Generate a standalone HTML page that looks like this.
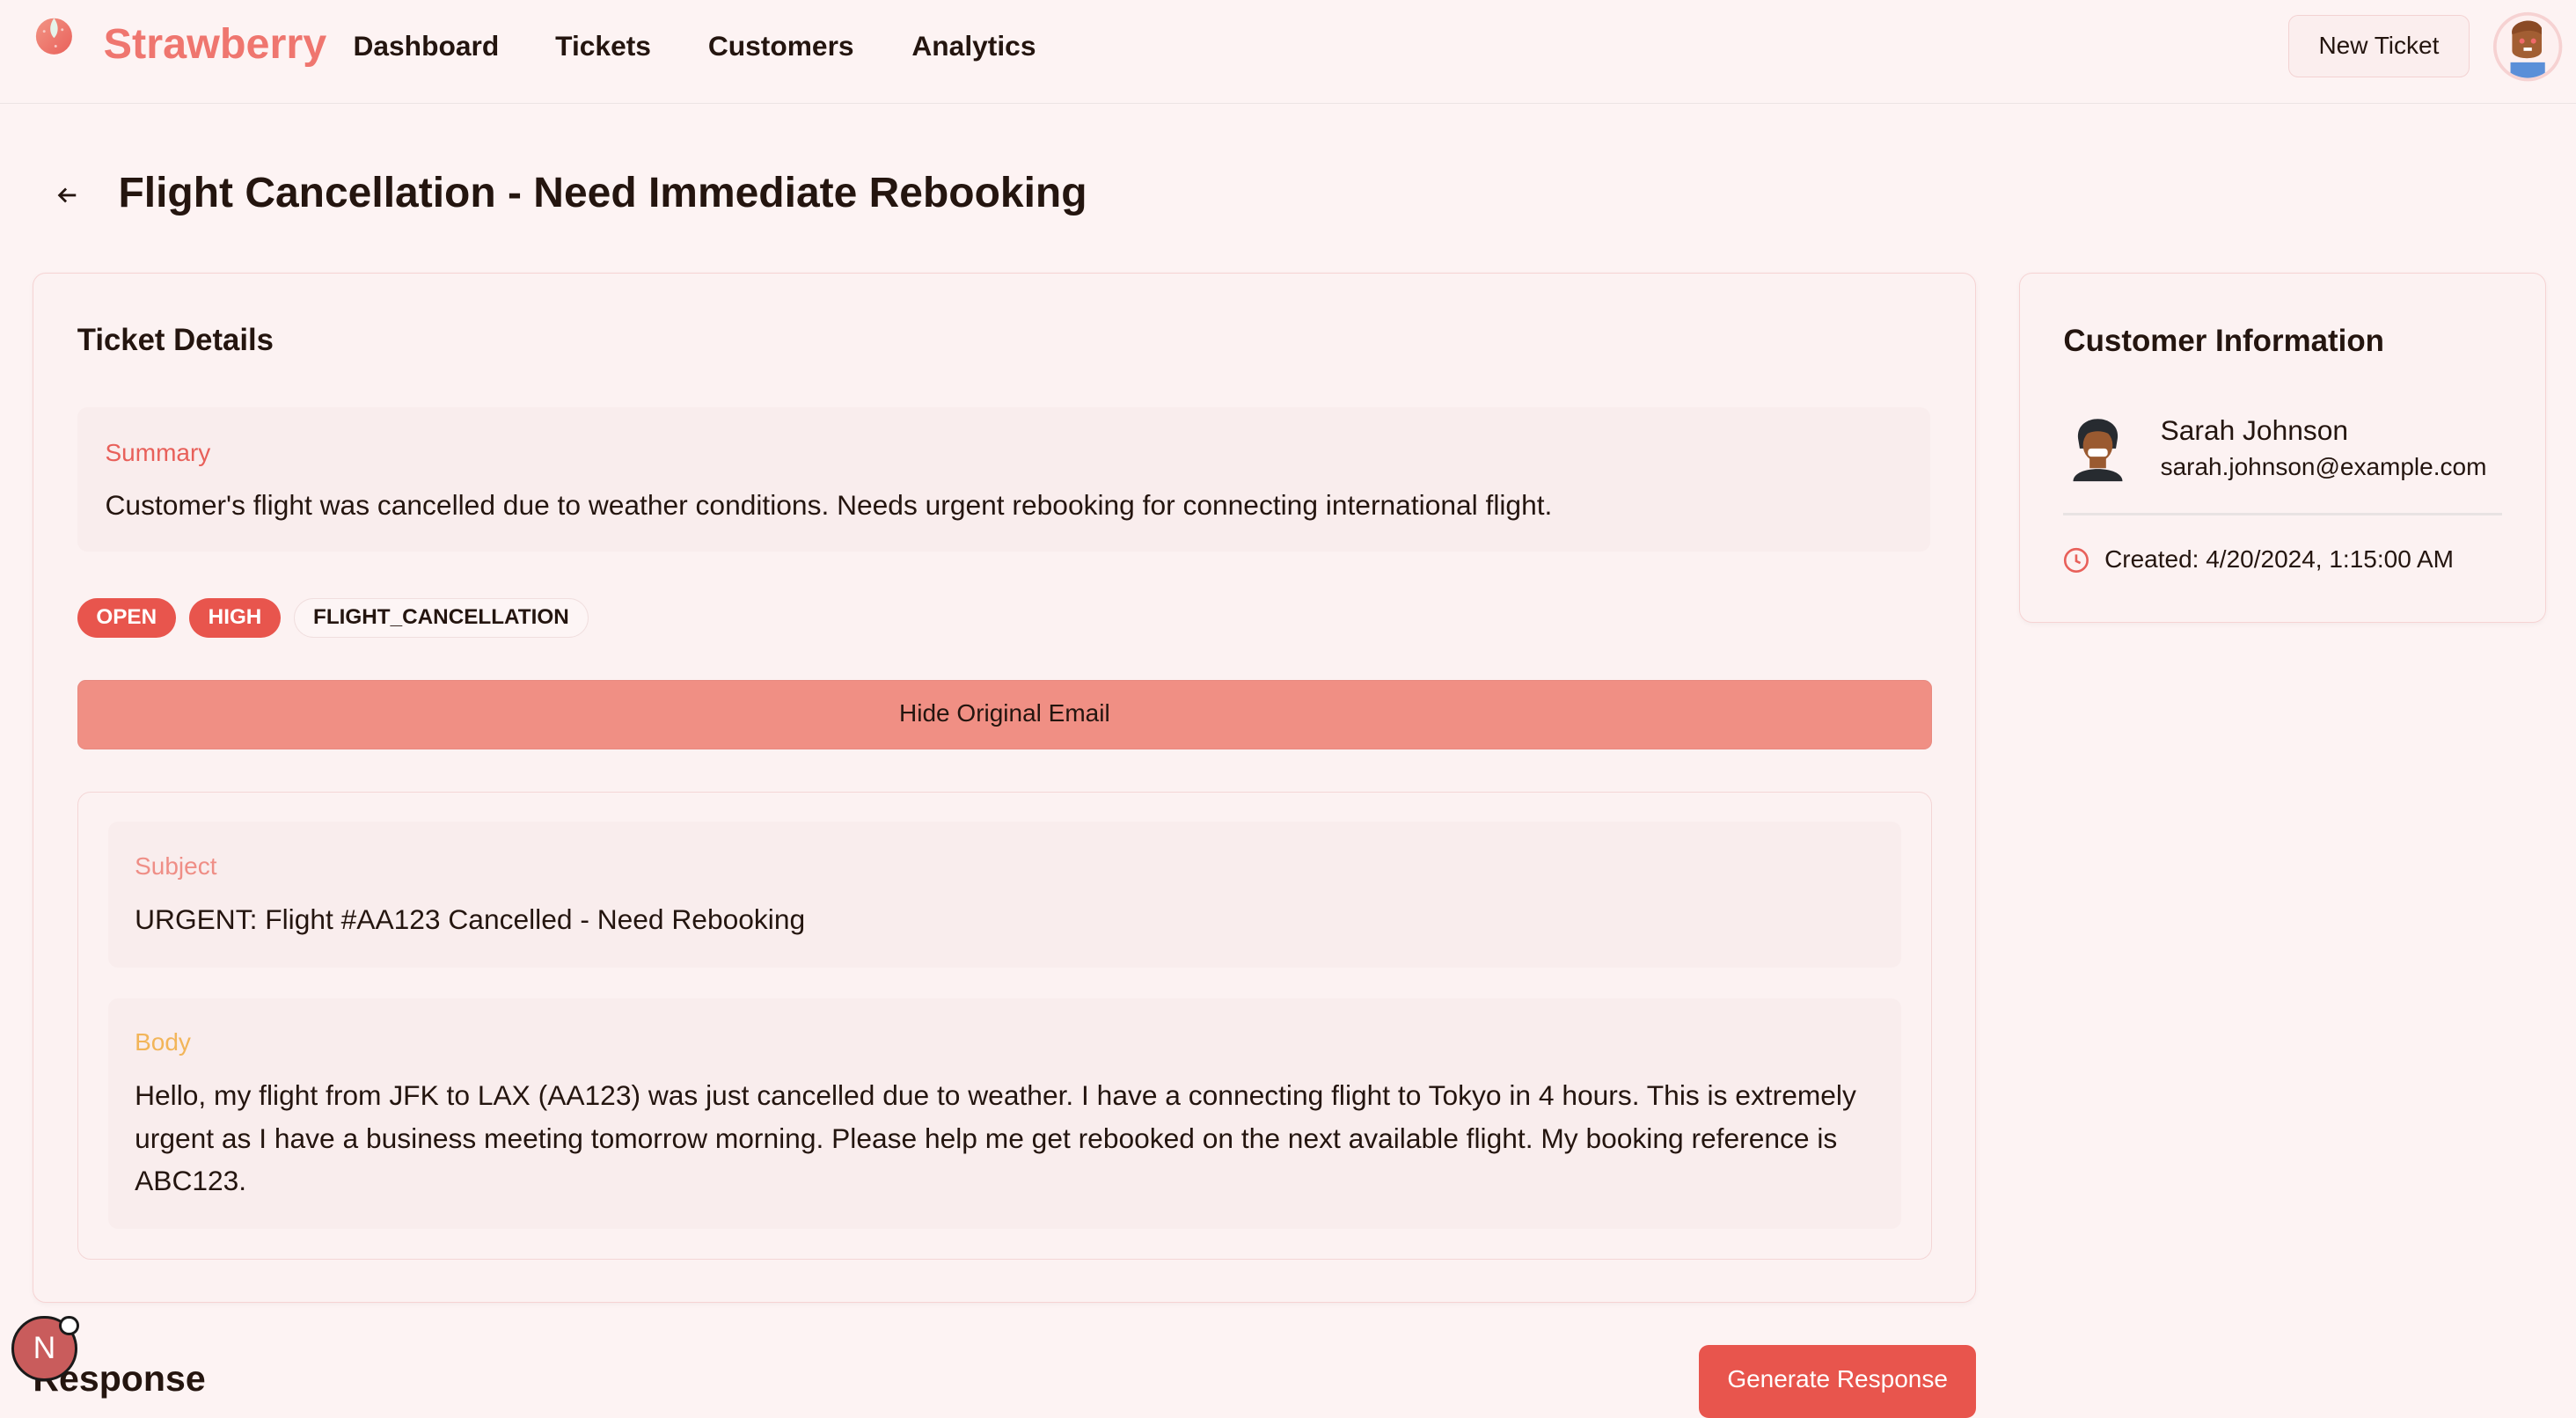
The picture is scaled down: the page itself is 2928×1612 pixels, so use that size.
<!DOCTYPE html>
<html><head><meta charset="utf-8"><style>
html{zoom:1.86735}
*{box-sizing:border-box;margin:0;padding:0}
body{width:1568px;height:850px;overflow:hidden;background:#fdf3f3;font-family:"Liberation Sans",Arial,sans-serif;color:#24150f;position:relative}
.a{position:absolute}
.hdr{left:0;top:0;width:1568px;height:63px;border-bottom:1px solid #ece4e4}
.nav{font-size:17px;font-weight:bold;top:18px}
.card{border:1px solid #f6d3d3;border-radius:8px;background:#fcf2f2;box-shadow:0 1px 3px rgba(0,0,0,.04)}
.box{background:#f9eded;border-radius:6px}
.tag{top:364px;height:24px;border-radius:12px;font-size:13px;font-weight:bold;line-height:24px;text-align:center}
</style></head><body>
<div class="a hdr"></div>
<svg class="a" style="left:21px;top:9px" width="24" height="24" viewBox="0 0 24 24"><defs><linearGradient id="g" x1="0" y1="0" x2="1" y2="1"><stop offset="0" stop-color="#f29585"/><stop offset="1" stop-color="#e9605a"/></linearGradient></defs><ellipse cx="12" cy="13" rx="11" ry="11" fill="url(#g)"/><path d="M12 2 C9 6 9 11 12 14 C15 11 15 6 12 2Z" fill="#e6f4ea"/><circle cx="6" cy="10" r=".8" fill="#f7c9c4"/><circle cx="17" cy="9" r=".8" fill="#f7c9c4"/><circle cx="13" cy="19" r=".8" fill="#f7c9c4"/></svg>
<div class="a" style="left:63px;top:12px;font-size:26px;font-weight:bold;color:#ef766f">Strawberry</div>
<div class="a nav" style="left:215px">Dashboard</div>
<div class="a nav" style="left:338px">Tickets</div>
<div class="a nav" style="left:431px">Customers</div>
<div class="a nav" style="left:555px">Analytics</div>
<div class="a" style="left:1393px;top:9px;width:110px;height:38px;border:1px solid #f3d2d2;border-radius:6px;background:#fbeeee;font-size:15px;line-height:36px;text-align:center">New Ticket</div>
<svg class="a" style="left:1517px;top:7px" width="43" height="43" viewBox="0 0 43 43"><circle cx="21.5" cy="21.5" r="20" fill="#fdf0f0" stroke="#f6d2d2" stroke-width="2"/><clipPath id="c"><circle cx="21.5" cy="21.5" r="19"/></clipPath><g clip-path="url(#c)"><rect x="11" y="31" width="21" height="12" fill="#5b8fd8"/><path d="M12 12 C12 5 30 5 30 12 L30 24 C30 30 12 30 12 24Z" fill="#a25e33"/><path d="M12 14 C10 6 26 2 30 10 L30 14 C24 10 18 12 12 14Z" fill="#8a4a25"/><circle cx="18" cy="18" r="1.6" fill="#ef6a6a"/><circle cx="25" cy="18" r="1.6" fill="#ef6a6a"/><rect x="19" y="22" width="5" height="2" fill="#fff"/></g></svg>

<svg class="a" style="left:33px;top:111px" width="16" height="16" viewBox="0 0 16 16"><path d="M13 8H3M7 4L3 8l4 4" fill="none" stroke="#24150f" stroke-width="1.5"/></svg>
<div class="a" style="left:72px;top:103px;font-size:25.7px;font-weight:bold">Flight Cancellation - Need Immediate Rebooking</div>

<div class="a card" style="left:20px;top:166px;width:1183px;height:627px"></div>
<div class="a" style="left:47px;top:197px;font-size:18.6px;font-weight:bold">Ticket Details</div>
<div class="a box" style="left:47px;top:248px;width:1128px;height:88px"></div>
<div class="a" style="left:64px;top:267px;font-size:15px;color:#e8605a">Summary</div>
<div class="a" style="left:64px;top:298px;font-size:17px">Customer's flight was cancelled due to weather conditions. Needs urgent rebooking for connecting international flight.</div>
<div class="a tag" style="left:47px;width:60px;background:#e8554d;color:#fff">OPEN</div>
<div class="a tag" style="left:115px;width:56px;background:#e8554d;color:#fff">HIGH</div>
<div class="a tag" style="left:179px;width:179px;border:1px solid #f0dede;background:#fdf5f5;line-height:22px">FLIGHT_CANCELLATION</div>
<div class="a" style="left:47px;top:414px;width:1129px;height:42px;background:#f08f84;border:1px solid #e88a80;border-radius:5px;font-size:15px;line-height:40px;text-align:center">Hide Original Email</div>
<div class="a" style="left:47px;top:482px;width:1129px;height:285px;border:1px solid #f4d6d6;border-radius:8px"></div>
<div class="a box" style="left:66px;top:500px;width:1091px;height:89px"></div>
<div class="a" style="left:82px;top:519px;font-size:15px;color:#ef8e86">Subject</div>
<div class="a" style="left:82px;top:550px;font-size:17px">URGENT: Flight #AA123 Cancelled - Need Rebooking</div>
<div class="a box" style="left:66px;top:608px;width:1091px;height:140px"></div>
<div class="a" style="left:82px;top:626px;font-size:15px;color:#f2b559">Body</div>
<div class="a" style="left:82px;top:654px;width:1068px;font-size:17px;line-height:26px">Hello, my flight from JFK to LAX (AA123) was just cancelled due to weather. I have a connecting flight to Tokyo in 4 hours. This is extremely urgent as I have a business meeting tomorrow morning. Please help me get rebooked on the next available flight. My booking reference is ABC123.</div>

<div class="a card" style="left:1229px;top:166px;width:321px;height:213px"></div>
<div class="a" style="left:1256px;top:197px;font-size:18.7px;font-weight:bold">Customer Information</div>
<svg class="a" style="left:1258px;top:249px" width="38" height="46" viewBox="0 0 38 46"><path d="M4 44 C4 34 34 34 34 44Z" fill="#272b30"/><rect x="14" y="28" width="10" height="8" fill="#9a5a30"/><path d="M7 18 C5 2 33 2 31 18 L30 24 L8 24Z" fill="#272b30"/><ellipse cx="19" cy="22" rx="9" ry="10" fill="#9a5a30"/><rect x="13" y="24" width="12" height="5" rx="2" fill="#fff"/><path d="M9 16 C12 10 26 10 29 16" stroke="#272b30" stroke-width="4" fill="none"/></svg>
<div class="a" style="left:1315px;top:252px;font-size:17px">Sarah Johnson</div>
<div class="a" style="left:1315px;top:276px;font-size:15px">sarah.johnson@example.com</div>
<div class="a" style="left:1256px;top:312px;width:267px;height:2px;background:#e8e3e3"></div>
<svg class="a" style="left:1256px;top:333px" width="16" height="16" viewBox="0 0 16 16"><circle cx="8" cy="8" r="6.8" fill="none" stroke="#e8605a" stroke-width="1.4"/><path d="M8 4.5V8.5L10.5 9.7" fill="none" stroke="#e8605a" stroke-width="1.4"/></svg>
<div class="a" style="left:1281px;top:332px;font-size:15px">Created: 4/20/2024, 1:15:00 AM</div>

<div class="a" style="left:20px;top:827px;font-size:22px;font-weight:bold">Response</div>
<div class="a" style="left:1034px;top:819px;width:169px;height:44px;background:#e8554d;border-radius:6px;color:#fff;font-size:15px;line-height:42px;text-align:center">Generate Response</div>
<div class="a" style="left:7px;top:801px;width:40px;height:40px;border-radius:50%;background:#c95c5c;border:2px solid #1a1a1a;color:#fff;font-size:19px;line-height:36px;text-align:center">N</div>
<div class="a" style="left:36px;top:801px;width:12px;height:12px;border-radius:50%;background:#fff;border:2px solid #1a1a1a"></div>
</body></html>
